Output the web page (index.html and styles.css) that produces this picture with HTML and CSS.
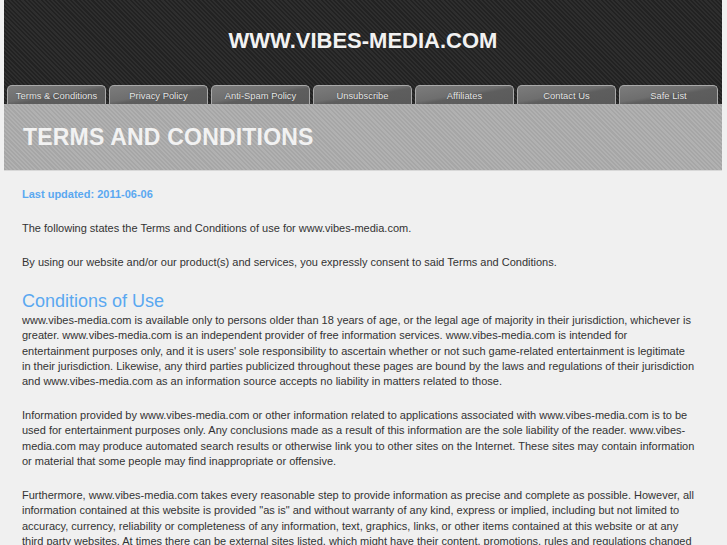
FILE: index.html
```html
<!DOCTYPE html>
<html>
<head>
<meta charset="utf-8">
<title>Terms and Conditions - www.vibes-media.com</title>
<link rel="stylesheet" href="styles.css">
</head>
<body>
<div class="page">
  <header class="header">
    <h1 class="site-title">WWW.VIBES-MEDIA.COM</h1>
    <nav class="tabs">
      <a class="tab" href="#">Terms &amp; Conditions</a>
      <a class="tab" href="#">Privacy Policy</a>
      <a class="tab" href="#">Anti-Spam Policy</a>
      <a class="tab" href="#">Unsubscribe</a>
      <a class="tab" href="#">Affiliates</a>
      <a class="tab" href="#">Contact Us</a>
      <a class="tab" href="#">Safe List</a>
    </nav>
  </header>
  <div class="banner">
    <h2 class="banner-title">TERMS AND CONDITIONS</h2>
  </div>
  <main class="content">
    <p class="updated">Last updated: 2011-06-06</p>
    <p>The following states the Terms and Conditions of use for www.vibes-media.com.</p>
    <p>By using our website and/or our product(s) and services, you expressly consent to said Terms and Conditions.</p>
    <h3 class="section-title">Conditions of Use</h3>
    <p>www.vibes-media.com is available only to persons older than 18 years of age, or the legal age of majority in their jurisdiction, whichever is greater. www.vibes-media.com is an independent provider of free information services. www.vibes-media.com is intended for entertainment purposes only, and it is users' sole responsibility to ascertain whether or not such game-related entertainment is legitimate in their jurisdiction. Likewise, any third parties publicized throughout these pages are bound by the laws and regulations of their jurisdiction and www.vibes-media.com as an information source accepts no liability in matters related to those.</p>
    <p>Information provided by www.vibes-media.com or other information related to applications associated with www.vibes-media.com is to be used for entertainment purposes only. Any conclusions made as a result of this information are the sole liability of the reader. www.vibes-media.com may produce automated search results or otherwise link you to other sites on the Internet. These sites may contain information or material that some people may find inappropriate or offensive.</p>
    <p>Furthermore, www.vibes-media.com takes every reasonable step to provide information as precise and complete as possible. However, all information contained at this website is provided "as is" and without warranty of any kind, express or implied, including but not limited to accuracy, currency, reliability or completeness of any information, text, graphics, links, or other items contained at this website or at any third party websites. At times there can be external sites listed, which might have their content, promotions, rules and regulations changed without notice, and www.vibes-media.com cannot be held responsible for such changes.</p>
  </main>
</div>
</body>
</html>
```
FILE: styles.css
```css
html, body {
  margin: 0;
  padding: 0;
  background: #f0f0f0;
}
body {
  font-family: "Liberation Sans", Arial, sans-serif;
  color: #333;
}
.page {
  margin: 0 5px 0 4px;
}
.header {
  height: 104px;
  background-color: #262626;
  background-image: repeating-linear-gradient(45deg, #222 0px, #222 1.5px, #2e2e2e 1.5px, #2e2e2e 3px);
  display: flex;
  flex-direction: column;
  align-items: stretch;
}
.site-title {
  margin: 0;
  flex: 1;
  display: flex;
  align-items: center;
  justify-content: center;
  padding-bottom: 4px;
  font-size: 22px;
  font-weight: bold;
  color: #f2f2f2;
}
.tabs {
  display: flex;
  gap: 3px;
  padding: 0 3px;
  height: 19px;
}
.tab {
  box-sizing: border-box;
  width: 99px;
  height: 19px;
  border: 1px solid #a9a9a9;
  border-bottom: none;
  border-radius: 5px 5px 0 0;
  background: linear-gradient(170deg, #7c7c7c 0%, #6e6e6e 45%, #5e5e5e 55%, #5a5a5a 100%);
  color: #e8e8e8;
  text-decoration: none;
  font-size: 9.4px;
  text-align: center;
  line-height: 19px;
  text-shadow: 0 0 1px #333;
}
.banner {
  height: 66px;
  border-bottom: 1px solid #d8d8d8;
  background-color: #ababab;
  background-image: repeating-linear-gradient(45deg, #a6a6a6 0px, #a6a6a6 1.5px, #b1b1b1 1.5px, #b1b1b1 3px);
  display: flex;
  align-items: center;
  padding-left: 19px;
}
.banner-title {
  margin: 0 0 -1px 0;
  font-size: 23px;
  font-weight: bold;
  letter-spacing: 0.2px;
  color: #f2f2f2;
}
.content {
  padding: 16px 27px 0 18px;
  font-size: 11px;
  line-height: 15.3px;
}
.content p {
  margin: 0 0 18.7px 0;
}
.content p.updated {
  color: #5aa8f0;
  font-weight: bold;
}
.section-title {
  margin: 5px 0 0 0;
  font-size: 18px;
  font-weight: normal;
  line-height: 24px;
  color: #5aa8f0;
}
```
